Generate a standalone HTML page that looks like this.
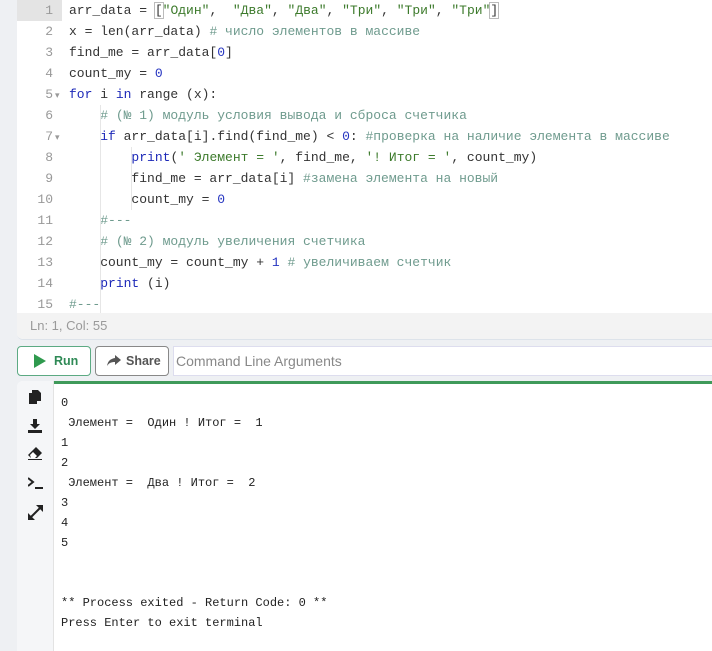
<!DOCTYPE html>
<html><head><meta charset="utf-8"><style>
*{margin:0;padding:0;box-sizing:border-box}
body{width:712px;height:641px;overflow:hidden;background:#eef0f3;font-family:"Liberation Sans",sans-serif;position:relative}
.ed{position:absolute;left:17px;top:0;width:700px;height:340px;background:#fff;border-radius:0 0 0 6px;overflow:hidden;border-bottom:1px solid #dde3ea}
.code{position:absolute;left:0;top:0;font-family:"Liberation Mono",monospace;font-size:13px;color:#333}
.ln{height:21px;line-height:21px;white-space:pre;position:relative}
.ln .n{display:inline-block;width:36px;text-align:right;color:#999}
.ln .f{display:inline-block;width:16px;color:#999;font-size:9px;text-align:left;padding-left:2px}
.ln.a{background:linear-gradient(90deg,#e4e4e4 0,#e4e4e4 45px,#fff 45px)}
.k{color:#1d29b8}.s{color:#3c7a2b}.c{color:#6f9b8e}.d{color:#2534c0}
.guide{position:absolute;width:1px;background:#e6e6e6}
.st{position:absolute;left:0;top:313px;width:700px;height:26px;background:#f3f3f3;color:#9a9a9a;font-size:13px;line-height:26px;padding-left:13px}
.btn{position:absolute;top:346px;height:30px;border-radius:4px;background:#fff;font-size:12.5px;font-weight:bold;line-height:28px}
.run{left:17px;width:74px;border:1px solid #5caa83;color:#2f8a56;padding-left:36px}
.share{left:95px;width:74px;border:1px solid #888;color:#555;padding-left:30px}
.inp{position:absolute;left:173px;top:346px;width:545px;height:30px;background:#fff;border:1px solid #dde;border-right:none;color:#888;font-size:14px;line-height:28px;padding-left:2px}
.out{position:absolute;left:17px;top:381px;width:700px;height:270px;background:#fff;border-radius:6px 0 0 0}
.side{position:absolute;left:0;top:0;width:37px;height:270px;background:#f5f6f8;border-right:1px solid #e3e3e3;border-radius:6px 0 0 0}
.green{position:absolute;left:37px;top:0;right:0;height:3px;background:#3f9a5a}
.ot{position:absolute;left:44px;top:12px;font-family:"Liberation Mono",monospace;font-size:12px;color:#222;white-space:pre;line-height:20px}
.ic{position:absolute;left:11px}
</style></head><body>
<div class="ed">
<div class="code">
<div class="ln a"><span class="n">1</span><span class="f"> </span>arr_data = <span style="outline:1px solid #bbb">[</span><span class="s">"Один"</span>,  <span class="s">"Два"</span>, <span class="s">"Два"</span>, <span class="s">"Три"</span>, <span class="s">"Три"</span>, <span class="s">"Три"</span><span style="outline:1px solid #bbb">]</span></div>
<div class="ln"><span class="n">2</span><span class="f"> </span>x = len(arr_data) <span class="c"># число элементов в массиве</span></div>
<div class="ln"><span class="n">3</span><span class="f"> </span>find_me = arr_data[<span class="d">0</span>]</div>
<div class="ln"><span class="n">4</span><span class="f"> </span>count_my = <span class="d">0</span></div>
<div class="ln"><span class="n">5</span><span class="f">▾</span><span class="k">for</span> i <span class="k">in</span> range (x):</div>
<div class="ln"><span class="n">6</span><span class="f"> </span>    <span class="c"># (№ 1) модуль условия вывода и сброса счетчика</span></div>
<div class="ln"><span class="n">7</span><span class="f">▾</span>    <span class="k">if</span> arr_data[i].find(find_me) &lt; <span class="d">0</span>: <span class="c">#проверка на наличие элемента в массиве</span></div>
<div class="ln"><span class="n">8</span><span class="f"> </span>        <span class="k">print</span>(<span class="s">' Элемент = '</span>, find_me, <span class="s">'! Итог = '</span>, count_my)</div>
<div class="ln"><span class="n">9</span><span class="f"> </span>        find_me = arr_data[i] <span class="c">#замена элемента на новый</span></div>
<div class="ln"><span class="n">10</span><span class="f"> </span>        count_my = <span class="d">0</span></div>
<div class="ln"><span class="n">11</span><span class="f"> </span>    <span class="c">#---</span></div>
<div class="ln"><span class="n">12</span><span class="f"> </span>    <span class="c"># (№ 2) модуль увеличения счетчика</span></div>
<div class="ln"><span class="n">13</span><span class="f"> </span>    count_my = count_my + <span class="d">1</span> <span class="c"># увеличиваем счетчик</span></div>
<div class="ln"><span class="n">14</span><span class="f"> </span>    <span class="k">print</span> (i)</div>
<div class="ln"><span class="n">15</span><span class="f"> </span><span class="c">#---</span></div>
</div>
<div class="guide" style="left:83px;top:105px;height:210px"></div>
<div class="guide" style="left:114px;top:147px;height:63px"></div>
<div class="st">Ln: 1,  Col: 55</div>
</div>
<div class="btn run"><svg style="position:absolute;left:16px;top:7px" width="12" height="14" viewBox="0 0 12 14"><path d="M0 0L12 7L0 14Z" fill="#2f9a4e"/></svg>Run</div>
<div class="btn share"><svg style="position:absolute;left:11px;top:8px" width="14" height="12" viewBox="0 0 14 12"><path d="M8 0L14 5L8 10V7C4 7 2 8 0 11C1 6 3 4 8 3Z" fill="#555"/></svg>Share</div>
<div class="inp">Command Line Arguments</div>
<div class="out">
<div class="side">
<svg class="ic" style="top:9px" width="14" height="14" viewBox="0 0 14 14"><rect x="1" y="3" width="8" height="11" fill="#222"/><path d="M4 0H10L13 3V11H4Z" fill="#222"/></svg>
<svg class="ic" style="top:38px" width="14" height="14" viewBox="0 0 14 14"><path d="M5 0H9V5H12L7 10L2 5H5Z" fill="#222"/><rect x="0" y="11" width="14" height="3" fill="#222"/></svg>
<svg class="ic" style="top:66px" width="14" height="13" viewBox="0 0 14 13"><path d="M8 0L14 6L9 11H3L0 8Z" fill="#222"/><path d="M2 8L5 5L9 9L7 11H3Z" fill="#fff"/><rect x="0" y="12" width="14" height="1" fill="#222"/></svg>
<svg class="ic" style="top:96px" width="16" height="12" viewBox="0 0 16 12"><path d="M0 1L5 5L0 9" stroke="#222" stroke-width="2" fill="none"/><rect x="7" y="10" width="8" height="2" fill="#222"/></svg>
<svg class="ic" style="top:124px" width="15" height="15" viewBox="0 0 15 15"><path d="M3 12L12 3" stroke="#222" stroke-width="2"/><path d="M8 0H15V7Z M0 8V15H7Z" fill="#222"/></svg>
</div>
<div class="green"></div>
<div class="ot">0
 Элемент =  Один ! Итог =  1
1
2
 Элемент =  Два ! Итог =  2
3
4
5


** Process exited - Return Code: 0 **
Press Enter to exit terminal</div>
</div>
</body></html>
